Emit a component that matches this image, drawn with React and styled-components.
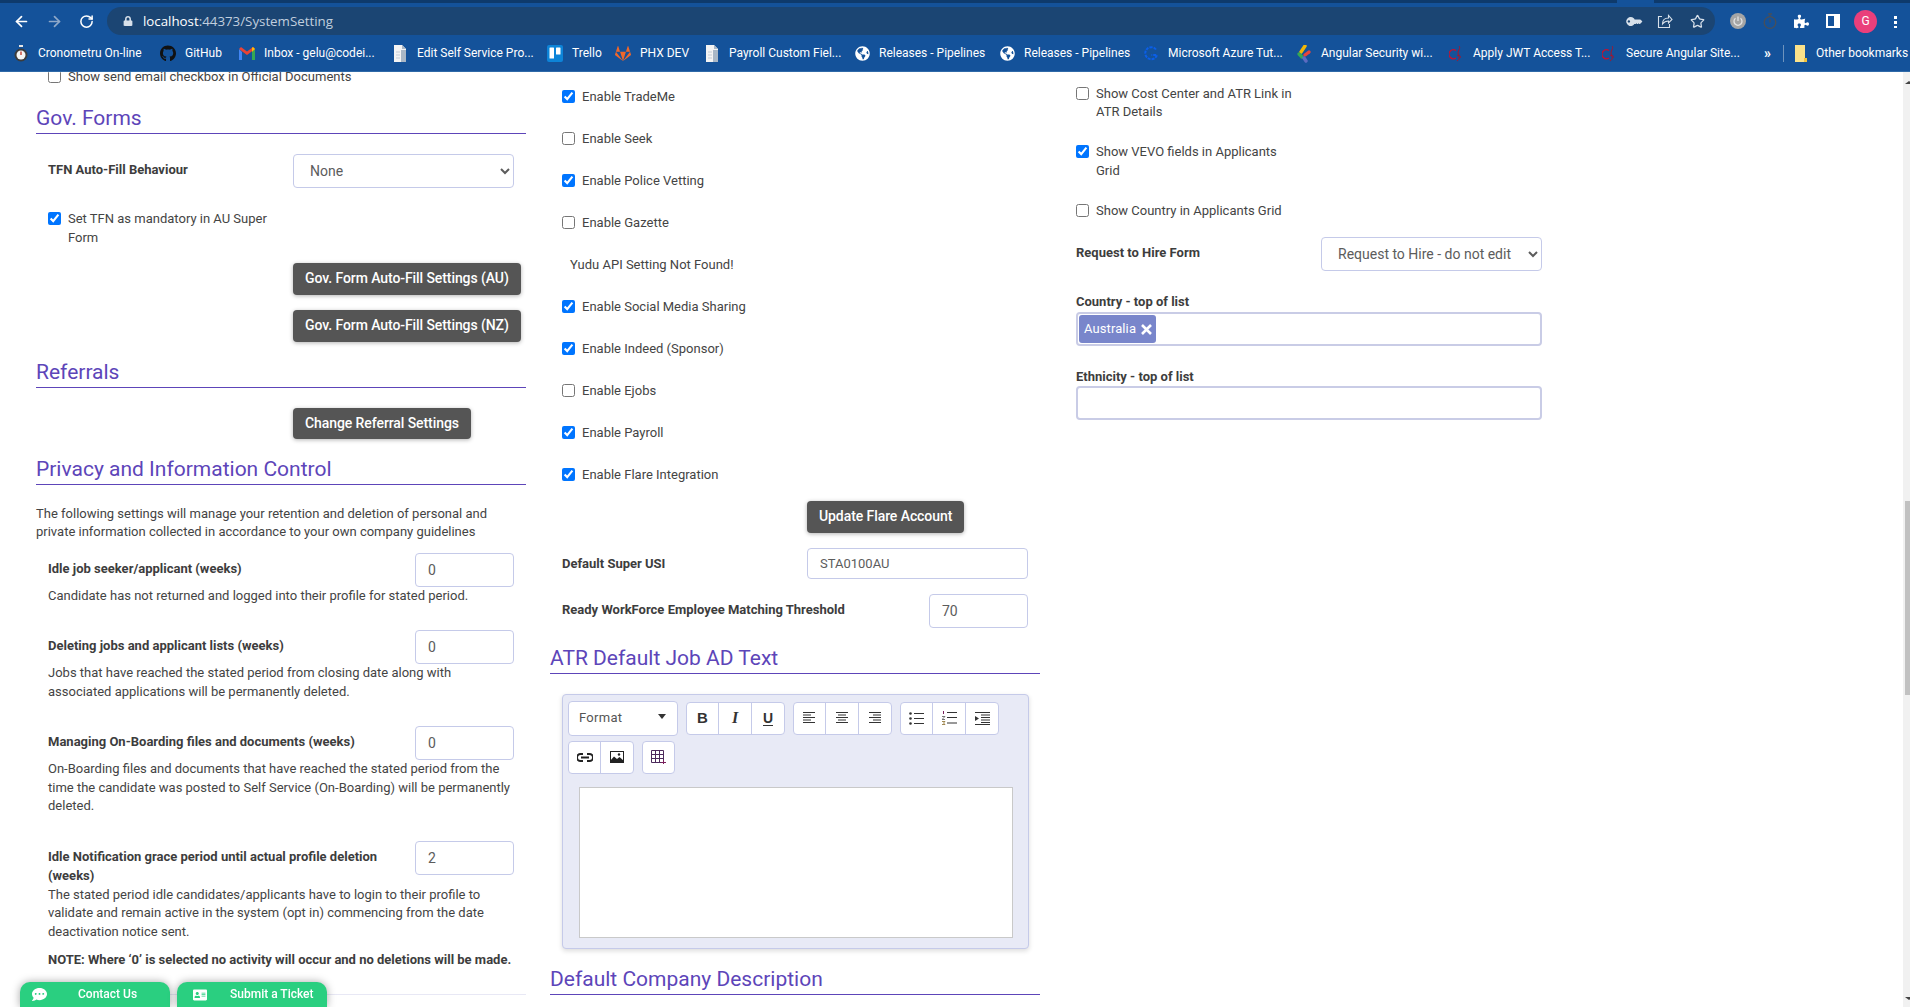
import React from "react";
import styled, { createGlobalStyle } from "styled-components";
import { ArrowLeft, ArrowRight, RotateCw, Star } from "lucide-react";
import {
  FaAddressCard,
  FaCommentDots,
  FaGithub,
  FaGitlab,
  FaGlobeAmericas,
  FaKey,
  FaLock,
  FaPuzzlePiece,
} from "react-icons/fa";

const GlobalStyle = createGlobalStyle`
  html, body {
    margin: 0;
    height: 100%;
    overflow: hidden;
    background: #fff;
    font-family: Roboto, "Liberation Sans", sans-serif;
    font-size: 13px;
    line-height: 18.57px;
    color: #444;
  }
  * { box-sizing: border-box; }
`;

/* browser chrome */
const Chrome = styled.header`
  height: 72px;
  background: #14529a;
  border-bottom: 1px solid #2f6aa8;
  color: #fff;
`;

const TabStrip = styled.div`
  height: 3px;
  background: #0e3a6c;
  display: flex;
`;

const TabGap = styled.div`
  width: 37px;
  margin-left: 1617px;
  background: #14529a;
`;

const Toolbar = styled.div`
  height: 33px;
  padding: 4px 0 1px 13px;
  display: flex;
  align-items: center;
`;

const NavButton = styled.span`
  display: flex;
  margin-left: ${(p) => p.$ml || 0}px;
  color: ${(p) => (p.$dim ? "#8fa9c9" : "#fff")};
`;

const Omnibox = styled.div`
  width: 1608px;
  height: 28px;
  margin-left: 13px;
  padding: 0 10px 0 16px;
  border-radius: 14px;
  background: #1b4573;
  display: flex;
  align-items: center;
  font-family: "Open Sans", sans-serif;
  font-size: 13.3px;
  color: #c0cede;
`;

const UrlHost = styled.span`
  margin-left: 10px;
  color: #fff;
`;

const OmniIcons = styled.div`
  margin-left: auto;
  display: flex;
  align-items: center;
  gap: 17px;
  color: #d7e0ea;
`;

const Extensions = styled.div`
  margin-left: 15px;
  display: flex;
  align-items: center;
  gap: 17px;
`;

const Avatar = styled.span`
  width: 23px;
  height: 23px;
  margin-left: -3px;
  border-radius: 50%;
  background: #ea3f7b;
  color: #fff;
  font-size: 12px;
  display: flex;
  align-items: center;
  justify-content: center;
`;

const Dots = styled.span`
  width: 3px;
  height: 13px;
  background: radial-gradient(circle, #fff 1.5px, transparent 1.7px) 0 0 / 3px 5px;
`;

const BookmarkBar = styled.nav`
  height: 35px;
  padding-left: 13px;
  display: flex;
  align-items: center;
  font-size: 12px;
  white-space: nowrap;
`;

const Bookmark = styled.span`
  flex: none;
  width: ${(p) => p.$w}px;
  display: flex;
  align-items: center;
  gap: 9px;
  color: #fff;
`;

const MarkIcon = styled.span`
  flex: none;
  width: 16px;
  height: 16px;
  display: flex;
  align-items: center;
  justify-content: center;
`;

const MoreMarks = styled.span`
  flex: none;
  width: 19px;
  font-size: 14px;
  font-weight: 700;
`;

const MarkDivider = styled.span`
  flex: none;
  width: 1px;
  height: 17px;
  margin-right: 11px;
  background: #6d93bd;
`;

/* page */
const Main = styled.main`
  height: 935px;
  display: flex;
  overflow: hidden;
  position: relative;
`;

const Columns = styled.div`
  flex: 1;
  padding-left: 36px;
  display: grid;
  grid-template-columns: repeat(3, 490px);
  column-gap: 24px;
  align-items: start;
`;

const Column = styled.section`
  margin-top: ${(p) => p.$top}px;
`;

const Heading = styled.h2`
  margin: ${(p) => p.$mt || 15}px 0 0;
  font-size: 21px;
  font-weight: 400;
  line-height: 30px;
  color: #5d45b9;
  border-bottom: 1px solid #5d45b9;
`;

const CheckRow = styled.label`
  margin-top: ${(p) => p.$mt || 0}px;
  padding-left: 12px;
  display: flex;
  align-items: flex-start;
  line-height: 18.57px;
`;

const CheckBox = styled.input.attrs({ type: "checkbox" })`
  flex: none;
  width: 13px;
  height: 13px;
  margin: 2px 7px 0 0;
`;

const CheckText = styled.span`
  max-width: ${(p) => (p.$narrow ? "203px" : "none")};
`;

const Notice = styled.div`
  margin-top: ${(p) => p.$mt}px;
  padding-left: 20px;
`;

const FormRow = styled.div`
  margin-top: ${(p) => p.$mt || 0}px;
  padding: 0 12px;
  display: flex;
  align-items: flex-start;
  justify-content: space-between;
`;

const FieldLabel = styled.div`
  margin-top: 7px;
  flex: 1;
  font-weight: 700;
  color: #3d3d3d;
`;

const Select = styled.select`
  flex: none;
  width: 221px;
  height: 34px;
  padding: 0 6px 0 12px;
  border: 1px solid #c5cae9;
  border-radius: 4px;
  background: #fff;
  color: #5c5c5c;
  font-family: Roboto, sans-serif;
  font-size: 14px;
`;

const TextInput = styled.input`
  flex: none;
  width: ${(p) => p.$w || 99}px;
  height: ${(p) => p.$h || 34}px;
  padding: 0 12px;
  border: 1px solid #c5cae9;
  border-radius: 4px;
  background: #fff;
  color: #5c5c5c;
  font-family: Roboto, sans-serif;
  font-size: ${(p) => p.$fs || 14}px;
`;

const DarkButton = styled.button`
  display: block;
  height: ${(p) => p.$h || 32}px;
  margin: ${(p) => p.$mt}px 0 0 257px;
  padding: 0 12px 2px;
  border: 0;
  border-radius: 4px;
  background: #555;
  color: #fff;
  font-family: Roboto, sans-serif;
  font-size: 14px;
  font-weight: 500;
  letter-spacing: -0.08px;
  white-space: nowrap;
  box-shadow: 0 1px 4px rgba(0, 0, 0, 0.3);
`;

const Para = styled.p`
  margin: ${(p) => p.$mt || 0}px 0 0;
`;

const Retention = styled.div`
  margin-top: ${(p) => p.$mt}px;
  padding: 0 12px;
`;

const RetentionHead = styled.div`
  display: flex;
  align-items: flex-start;
  gap: 12px;
`;

const Divider = styled.div`
  height: 1px;
  margin-top: 24.4px;
  background: #e8e8f5;
`;

const FieldCaption = styled.div`
  margin-top: ${(p) => p.$mt}px;
  font-weight: 700;
  color: #3d3d3d;
`;

const TagBox = styled.div`
  width: 466px;
  height: 34px;
  padding: 1px;
  border: 2px solid #c9cce6;
  border-radius: 4px;
  display: flex;
  background: #fff;
`;

const Tag = styled.span`
  width: 77px;
  height: 28px;
  padding-left: 5px;
  border-radius: 3px;
  background: #7986cb;
  color: #fff;
  display: flex;
  align-items: center;
  gap: 5px;
  letter-spacing: 0.1px;
`;

/* rich text editor */
const Editor = styled.div`
  width: 467px;
  height: 255px;
  margin: 20px 0 0 12px;
  padding: 6px 5px 0;
  border: 1px solid #c5cae9;
  border-radius: 4px;
  background: #e8eaf6;
  box-shadow: 0 2px 5px rgba(0, 0, 0, 0.14);
`;

const ToolRow = styled.div`
  height: 39px;
  display: flex;
  align-items: flex-start;
  gap: 8px;
`;

const FormatPicker = styled.div`
  width: 110px;
  height: 35px;
  padding: 0 11px 0 10px;
  border: 1px solid #c5cae9;
  border-radius: 4px;
  background: #fff;
  display: flex;
  align-items: center;
  justify-content: space-between;
  font-size: 13px;
  color: #555;
  letter-spacing: 0.3px;
`;

const Caret = styled.span`
  width: 0;
  height: 0;
  margin-top: -4px;
  border-left: 4px solid transparent;
  border-right: 4px solid transparent;
  border-top: 5px solid #333;
`;

const ToolGroup = styled.div`
  height: 33px;
  margin-top: 1px;
  border: 1px solid #c5cae9;
  border-radius: 4px;
  background: #fff;
  display: flex;
`;

const ToolButton = styled.span`
  width: 33px;
  border-left: 1px solid #c5cae9;
  display: flex;
  align-items: center;
  justify-content: center;
  color: #333;
  font-size: 14px;
  &:first-child {
    width: 31px;
    border-left: 0;
  }
`;

const BoldMark = styled.b`
  font-family: "Liberation Sans", sans-serif;
  font-size: 15px;
`;

const ItalicMark = styled.i`
  font-family: "Liberation Serif", serif;
  font-size: 16px;
  font-weight: 700;
`;

const UnderMark = styled.span`
  font-family: "Liberation Sans", sans-serif;
  font-size: 14px;
  font-weight: 700;
  border-bottom: 1.5px solid #333;
  line-height: 14px;
`;

const EditArea = styled.div`
  width: 434px;
  height: 151px;
  margin: 8px 0 0 11px;
  border: 1.5px solid #c9c9c9;
  background: #fff;
`;

/* scrollbar and floating buttons */
const ScrollTrack = styled.div`
  flex: none;
  width: 7px;
  background: #f1f1f1;
  position: relative;
`;

const ScrollThumb = styled.div`
  width: 5px;
  height: 194px;
  margin: 429px 0 0 2px;
  background: #c1c1c1;
`;

const ScrollArrow = styled.span`
  position: absolute;
  right: -3px;
  width: 0;
  height: 0;
  border-left: 4px solid transparent;
  border-right: 4px solid transparent;
  ${(p) =>
    p.$down
      ? "bottom: 7px; border-top: 3px solid #444;"
      : "top: 9px; border-bottom: 3px solid #444;"}
`;

const FloatBar = styled.div`
  position: fixed;
  left: 20px;
  bottom: 0;
  display: flex;
  gap: 7px;
`;

const FloatButton = styled.div`
  width: 150px;
  height: 25px;
  padding: 0 0 0 ${(p) => p.$pad}px;
  border-radius: 10px 10px 0 0;
  background: #2acf80;
  color: #fff;
  display: flex;
  align-items: center;
  font-size: 12px;
  font-weight: 500;
  box-shadow: 0 0 8px rgba(0, 0, 0, 0.35);
`;

const FloatLabel = styled.span`
  margin-left: ${(p) => p.$ml}px;
`;

const Doc = () => (
  <svg width="16" height="17" viewBox="0 0 16 17">
    <path d="M2 0h8l4 4v13H2z" fill="#f4f4f4" />
    <path d="M10 0v4h4zM9 5h5v12H9z" fill="#a9b7c6" />
    <path d="M4 7h4M4 10h4M4 13h4" stroke="#c4ccd6" />
  </svg>
);

const Watch = () => (
  <svg width="14" height="17" viewBox="0 0 14 17">
    <rect x="5" y="0" width="4" height="2" fill="#e6e6e6" />
    <circle cx="7" cy="10" r="6.5" fill="#3c3c3c" />
    <circle cx="7" cy="10" r="4.5" fill="#f4f4f4" />
    <path d="M7 10V6.500" stroke="#c6402f" strokeWidth="1.4" />
  </svg>
);

const Gmail = () => (
  <svg width="16" height="13" viewBox="0 0 16 13">
    <path d="M0 2v11h3V5z" fill="#4285f4" />
    <path d="M13 5v8h3V2z" fill="#34a853" />
    <path d="M0 2l8 6 8-6-2-2-6 4.500L2 0z" fill="#ea4335" />
    <path d="M13 5l3-3-2-2-1 .8z" fill="#fbbc04" />
  </svg>
);

const TrelloMark = () => (
  <svg width="16" height="17" viewBox="0 0 16 17">
    <rect width="16" height="17" rx="2" fill="#0d84d8" />
    <rect x="2.500" y="2.500" width="4.500" height="11" rx="0.6" fill="#fff" />
    <rect x="9" y="2.500" width="4.500" height="7" rx="0.6" fill="#fff" />
  </svg>
);

const AzureMark = () => (
  <svg width="14" height="16" viewBox="0 0 14 16">
    <path d="M12 3.500A6 6 0 1 0 13 9H7.500" fill="none" stroke="#0b5fe8" strokeWidth="2" strokeDasharray="3 1" />
  </svg>
);

const LeafMark = () => (
  <svg width="16" height="18" viewBox="0 0 16 18">
    <path d="M9 1 5 7" stroke="#f2b705" strokeWidth="3.4" strokeLinecap="round" />
    <path d="M3 9l3 3" stroke="#35a853" strokeWidth="3.4" strokeLinecap="round" />
    <path d="M13 7l-4 3" stroke="#e8453c" strokeWidth="3.4" strokeLinecap="round" />
    <path d="M8 13l2 3" stroke="#5c6bc0" strokeWidth="3.4" strokeLinecap="round" />
  </svg>
);

const ClefMark = () => (
  <svg width="14" height="18" viewBox="0 0 14 18">
    <path d="M7 5.500A4.500 4.500 0 1 0 7 13" fill="none" stroke="#c8102e" strokeWidth="1.3" />
    <path d="M10 1c2 2-1 4-1 7s2 4 1 6-2 2-2 1M8 11c2-2 4 0 3 2" fill="none" stroke="#a8152c" strokeWidth="1" />
  </svg>
);

const FolderMark = () => (
  <svg width="12" height="17" viewBox="0 0 12 17">
    <path d="M0 0h10v13h2v4H0z" fill="#fbe28a" />
    <path d="M9 13h3v4H9z" fill="#f0c23e" />
  </svg>
);

const ShareIcon = () => (
  <svg width="16" height="16" viewBox="0 0 16 16" fill="none" stroke="#d7e0ea" strokeWidth="1.1">
    <path d="M5 3.500H1.500v11h11V11" />
    <path d="M5.500 11c0-4 2.500-6 6-6V2.500L15 6.500l-3.500 3.500V8c-3 0-4.500 1-6 3z" />
  </svg>
);

const PowerBadge = () => (
  <svg width="16" height="16" viewBox="0 0 16 16">
    <circle cx="8" cy="8" r="8" fill="#a5a5a5" />
    <path d="M5.500 5.200a4 4 0 1 0 5 0M8 3.500V8" fill="none" stroke="#e4e4e4" strokeWidth="1.3" />
  </svg>
);

const DarkWatch = () => (
  <svg width="14" height="16" viewBox="0 0 14 16" fill="none" stroke="#4a4f57" strokeWidth="1.3">
    <circle cx="7" cy="9.500" r="5.800" />
    <path d="M5 .8h4M7 1v2.500M7 9.500V6" />
  </svg>
);

const SidePanel = () => (
  <svg width="14" height="14" viewBox="0 0 14 14">
    <rect width="14" height="14" fill="#fff" />
    <rect x="2" y="2" width="6" height="10" fill="#14529a" />
  </svg>
);

const alignRows = {
  left: [[0, 12], [0, 8], [0, 12], [0, 8], [0, 12]],
  center: [[0, 12], [2, 8], [0, 12], [2, 8], [0, 12]],
  right: [[0, 12], [4, 8], [0, 12], [4, 8], [0, 12]],
};

const AlignIcon = ({ kind }) => (
  <svg width="13" height="12" viewBox="0 0 13 12" stroke="#333" strokeWidth="1">
    {alignRows[kind].map(([x, w], i) => (
      <line key={i} x1={x} x2={x + w} y1={i * 2.5 + 0.5} y2={i * 2.5 + 0.5} />
    ))}
  </svg>
);

const BulletIcon = () => (
  <svg width="15" height="13" viewBox="0 0 15 13" stroke="#333">
    <circle cx="1.500" cy="1.500" r="1.300" fill="#333" stroke="none" />
    <circle cx="1.500" cy="6.500" r="1.300" fill="#333" stroke="none" />
    <circle cx="1.500" cy="11.500" r="1.300" fill="#333" stroke="none" />
    <path d="M5 1.500h10M5 6.500h10M5 11.500h10" />
  </svg>
);

const NumberIcon = () => (
  <svg width="15" height="14" viewBox="0 0 15 14" stroke="#333">
    <path d="M1.500 0v3" stroke="#7a1f5c" />
    <path d="M0 5.500h3L0 8.500h3" fill="none" stroke="#555" strokeWidth="0.8" />
    <path d="M0 10.500h3l-1.500 1.500 1.500 1.500H0" fill="none" stroke="#8a6d2a" strokeWidth="0.8" />
    <path d="M5 1.500h10M5 6.500h10M5 12h10" />
  </svg>
);

const IndentIcon = () => (
  <svg width="15" height="13" viewBox="0 0 15 13" stroke="#333">
    <path d="M0 .5h15M6 3h9M6 5.500h9M6 8h9M6 10.500h9M0 12.500h15" />
    <path d="M0 4l4 2.500L0 9z" fill="#333" stroke="none" />
  </svg>
);

const LinkIcon = () => (
  <svg width="16" height="9" viewBox="0 0 16 9" fill="none" stroke="#222" strokeWidth="2">
    <path d="M6 1H3.500a3.500 3.500 0 0 0 0 7H6M10 1h2.500a3.500 3.500 0 0 1 0 7H10M4 4.500h8" />
  </svg>
);

const PictureIcon = () => (
  <svg width="14" height="12" viewBox="0 0 14 12">
    <rect x="0.5" y="0.5" width="13" height="11" fill="#fff" stroke="#222" />
    <path d="M0 12V10l4-4.500 3 2.500 2.500-2L14 10v2z" fill="#222" />
    <circle cx="9" cy="3.500" r="1.200" fill="#222" />
  </svg>
);

const TableIcon = () => (
  <svg width="15" height="14" viewBox="0 0 15 14" fill="none">
    <path d="M.5.500h12v12H.5zM.5 4.500h12M.5 8.500h12M4.500.5v12M8.500.5v12" stroke="#4d2a5c" />
    <path d="M10 12.500h5M12.500 10v4" stroke="#7a1f5c" fill="none" />
  </svg>
);

const CrossIcon = () => (
  <svg width="11" height="11" viewBox="0 0 11 11" stroke="#fff" strokeWidth="2.600">
    <path d="M1 1l9 9M10 1l-9 9" />
  </svg>
);

const bookmarks = [
  { w: 147, text: "Cronometru On-line", icon: <Watch /> },
  { w: 79, text: "GitHub", icon: <FaGithub size={17} color="#111" /> },
  { w: 153, text: "Inbox - gelu@codei...", icon: <Gmail /> },
  { w: 155, text: "Edit Self Service Pro...", icon: <Doc /> },
  { w: 68, text: "Trello", icon: <TrelloMark /> },
  { w: 89, text: "PHX DEV", icon: <FaGitlab size={17} color="#f2672a" /> },
  { w: 150, text: "Payroll Custom Fiel...", icon: <Doc /> },
  { w: 145, text: "Releases - Pipelines", icon: <FaGlobeAmericas size={15} /> },
  { w: 144, text: "Releases - Pipelines", icon: <FaGlobeAmericas size={15} /> },
  { w: 153, text: "Microsoft Azure Tut...", icon: <AzureMark /> },
  { w: 152, text: "Angular Security wi...", icon: <LeafMark /> },
  { w: 153, text: "Apply JWT Access T...", icon: <ClefMark /> },
  { w: 163, text: "Secure Angular Site...", icon: <ClefMark /> },
];

const BrowserChrome = () => (
  <Chrome>
    <TabStrip>
      <TabGap />
    </TabStrip>
    <Toolbar>
      <NavButton>
        <ArrowLeft size={17} strokeWidth={2.4} />
      </NavButton>
      <NavButton $ml={16} $dim>
        <ArrowRight size={17} strokeWidth={2.4} />
      </NavButton>
      <NavButton $ml={16}>
        <RotateCw size={15} strokeWidth={2.4} />
      </NavButton>
      <Omnibox>
        <FaLock size={10} color="#d7e0ea" />
        <UrlHost>localhost</UrlHost>:44373/SystemSetting
        <OmniIcons>
          <FaKey size={13} style={{ transform: "scaleX(-1) rotate(45deg)" }} />
          <ShareIcon />
          <Star size={15} />
        </OmniIcons>
      </Omnibox>
      <Extensions>
        <PowerBadge />
        <DarkWatch />
        <FaPuzzlePiece size={15} color="#fff" />
        <SidePanel />
        <Avatar>G</Avatar>
        <Dots />
      </Extensions>
    </Toolbar>
    <BookmarkBar>
      {bookmarks.map((b, i) => (
        <Bookmark key={i} $w={b.w}>
          <MarkIcon>{b.icon}</MarkIcon>
          {b.text}
        </Bookmark>
      ))}
      <MoreMarks>»</MoreMarks>
      <MarkDivider />
      <Bookmark $w={115}>
        <FolderMark />
        Other bookmarks
      </Bookmark>
    </BookmarkBar>
  </Chrome>
);

const Check = ({ on, narrow, mt, children }) => (
  <CheckRow $mt={mt}>
    <CheckBox defaultChecked={on} />
    <CheckText $narrow={narrow}>{children}</CheckText>
  </CheckRow>
);

const retention = [
  {
    mt: 11.7,
    label: "Idle job seeker/applicant (weeks)",
    value: "0",
    text: "Candidate has not returned and logged into their profile for stated period.",
  },
  {
    mt: 24.4,
    label: "Deleting jobs and applicant lists (weeks)",
    value: "0",
    text: "Jobs that have reached the stated period from closing date along with associated applications will be permanently deleted.",
  },
  {
    mt: 24.6,
    label: "Managing On-Boarding files and documents (weeks)",
    value: "0",
    text: "On-Boarding files and documents that have reached the stated period from the time the candidate was posted to Self Service (On-Boarding) will be permanently deleted.",
  },
  {
    mt: 25.6,
    label: "Idle Notification grace period until actual profile deletion (weeks)",
    value: "2",
    text: "The stated period idle candidates/applicants have to login to their profile to validate and remain active in the system (opt in) commencing from the date deactivation notice sent.",
  },
];

const LeftColumn = () => (
  <Column $top={-4}>
    <Check>Show send email checkbox in Official Documents</Check>
    <Heading $mt={16.43}>Gov. Forms</Heading>
    <FormRow $mt={20}>
      <FieldLabel>TFN Auto-Fill Behaviour</FieldLabel>
      <Select defaultValue="None">
        <option>None</option>
      </Select>
    </FormRow>
    <Check on narrow mt={22}>
      Set TFN as mandatory in AU Super Form
    </Check>
    <DarkButton $mt={16}>Gov. Form Auto-Fill Settings (AU)</DarkButton>
    <DarkButton $mt={15}>Gov. Form Auto-Fill Settings (NZ)</DarkButton>
    <Heading>Referrals</Heading>
    <DarkButton $mt={20} $h={31}>
      Change Referral Settings
    </DarkButton>
    <Heading>Privacy and Information Control</Heading>
    <Para $mt={19.5}>
      The following settings will manage your retention and deletion of personal and private
      information collected in accordance to your own company guidelines
    </Para>
    {retention.map((r) => (
      <Retention key={r.label} $mt={r.mt}>
        <RetentionHead>
          <FieldLabel>{r.label}</FieldLabel>
          <TextInput defaultValue={r.value} />
        </RetentionHead>
        <Para>{r.text}</Para>
      </Retention>
    ))}
    <Retention $mt={9.9}>
      <FieldCaption $mt={0}>
        NOTE: Where ‘0’ is selected no activity will occur and no deletions will be made.
      </FieldCaption>
    </Retention>
    <Divider />
  </Column>
);

const integrations = [
  ["Enable TradeMe", true],
  ["Enable Seek", false],
  ["Enable Police Vetting", true],
  ["Enable Gazette", false],
  ["Yudu API Setting Not Found!", null],
  ["Enable Social Media Sharing", true],
  ["Enable Indeed (Sponsor)", true],
  ["Enable Ejobs", false],
  ["Enable Payroll", true],
  ["Enable Flare Integration", true],
];

const MiddleColumn = () => (
  <Column $top={16}>
    {integrations.map(([text, on], i) =>
      on === null ? (
        <Notice key={text} $mt={23.43}>
          {text}
        </Notice>
      ) : (
        <Check key={text} on={on} mt={i ? 23.43 : 0}>
          {text}
        </Check>
      )
    )}
    <DarkButton $mt={16.4}>Update Flare Account</DarkButton>
    <FormRow $mt={15}>
      <FieldLabel>Default Super USI</FieldLabel>
      <TextInput $w={221} $h={31} $fs={13} defaultValue="STA0100AU" />
    </FormRow>
    <FormRow $mt={15}>
      <FieldLabel>Ready WorkForce Employee Matching Threshold</FieldLabel>
      <TextInput defaultValue="70" />
    </FormRow>
    <Heading>ATR Default Job AD Text</Heading>
    <Editor>
      <ToolRow>
        <FormatPicker>
          Format
          <Caret />
        </FormatPicker>
        <ToolGroup>
          <ToolButton>
            <BoldMark>B</BoldMark>
          </ToolButton>
          <ToolButton>
            <ItalicMark>I</ItalicMark>
          </ToolButton>
          <ToolButton>
            <UnderMark>U</UnderMark>
          </ToolButton>
        </ToolGroup>
        <ToolGroup>
          <ToolButton>
            <AlignIcon kind="left" />
          </ToolButton>
          <ToolButton>
            <AlignIcon kind="center" />
          </ToolButton>
          <ToolButton>
            <AlignIcon kind="right" />
          </ToolButton>
        </ToolGroup>
        <ToolGroup>
          <ToolButton>
            <BulletIcon />
          </ToolButton>
          <ToolButton>
            <NumberIcon />
          </ToolButton>
          <ToolButton>
            <IndentIcon />
          </ToolButton>
        </ToolGroup>
      </ToolRow>
      <ToolRow>
        <ToolGroup>
          <ToolButton>
            <LinkIcon />
          </ToolButton>
          <ToolButton>
            <PictureIcon />
          </ToolButton>
        </ToolGroup>
        <ToolGroup>
          <ToolButton>
            <TableIcon />
          </ToolButton>
        </ToolGroup>
      </ToolRow>
      <EditArea />
    </Editor>
    <Heading>Default Company Description</Heading>
  </Column>
);

const RightColumn = () => (
  <Column $top={12.5}>
    <Check narrow>Show Cost Center and ATR Link in ATR Details</Check>
    <Check on narrow mt={21.6}>
      Show VEVO fields in Applicants Grid
    </Check>
    <Check mt={21.9}>Show Country in Applicants Grid</Check>
    <FormRow $mt={16.2}>
      <FieldLabel>Request to Hire Form</FieldLabel>
      <Select defaultValue="Request to Hire - do not edit">
        <option>Request to Hire - do not edit</option>
      </Select>
    </FormRow>
    <Retention $mt={22.5}>
      <FieldCaption $mt={0}>Country - top of list</FieldCaption>
      <TagBox>
        <Tag>
          Australia
          <CrossIcon />
        </Tag>
      </TagBox>
      <FieldCaption $mt={21.5}>Ethnicity - top of list</FieldCaption>
      <TagBox />
    </Retention>
  </Column>
);

const App = () => (
  <>
    <GlobalStyle />
    <BrowserChrome />
    <Main>
      <Columns>
        <LeftColumn />
        <MiddleColumn />
        <RightColumn />
      </Columns>
      <ScrollTrack>
        <ScrollArrow />
        <ScrollThumb />
        <ScrollArrow $down />
      </ScrollTrack>
    </Main>
    <FloatBar>
      <FloatButton $pad={12}>
        <FaCommentDots size={15} />
        <FloatLabel $ml={31}>Contact Us</FloatLabel>
      </FloatButton>
      <FloatButton $pad={16}>
        <FaAddressCard size={14} />
        <FloatLabel $ml={23}>Submit a Ticket</FloatLabel>
      </FloatButton>
    </FloatBar>
  </>
);

export default App;
